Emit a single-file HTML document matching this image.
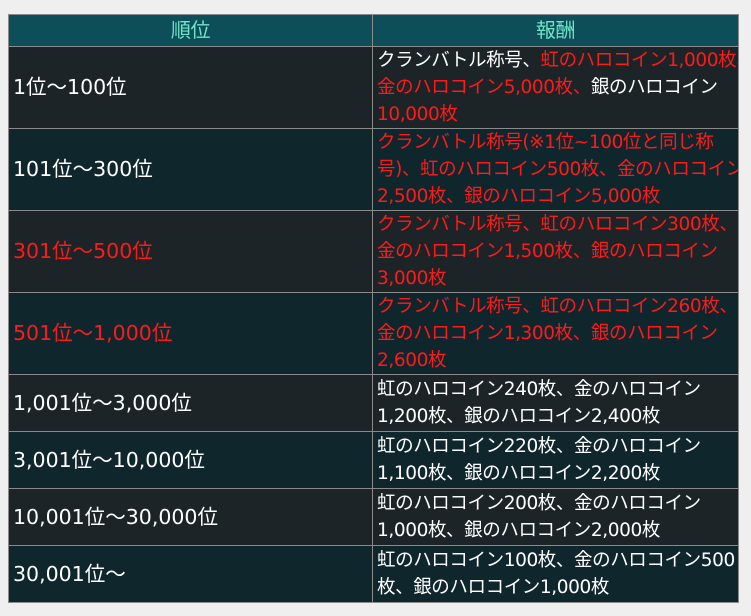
<!DOCTYPE html>
<html><head><meta charset="utf-8"><style>
body{margin:0;width:751px;height:616px;background:#efefef;font-family:"DejaVu Sans","Noto Sans CJK JP",sans-serif;}
table{position:absolute;left:8px;top:14px;width:730px;border-collapse:collapse;table-layout:fixed}
td,th{border:1px solid #8a8a8a;font-size:18.5px;line-height:27px;color:#fff;padding:0 0 0 4px;white-space:nowrap;font-weight:normal;text-align:left;vertical-align:middle;letter-spacing:-0.4px;overflow:hidden}
td:first-child{font-size:20.5px;letter-spacing:0}
th{background:#0e4e58;color:#6fe6c8;text-align:center;height:31px;padding:0;font-size:20px}
tr.a td{background:#1c2427}
tr.b td{background:#10262d}
.r{color:#ff1a1a}
</style></head><body>
<table>
<colgroup><col style="width:364px"><col style="width:366px"></colgroup>
<tr><th>順位</th><th>報酬</th></tr>
<tr class="a" style="height:82px"><td>1位～100位</td><td>クランバトル称号、<span class="r">虹のハロコイン1,000枚、<br>金のハロコイン5,000枚、</span>銀のハロコイン<br><span class="r">10,000枚</span></td></tr>
<tr class="b" style="height:82px"><td>101位～300位</td><td class="r">クランバトル称号(※1位~100位と同じ称<br>号)、虹のハロコイン500枚、金のハロコイン<br>2,500枚、銀のハロコイン5,000枚</td></tr>
<tr class="a" style="height:82px"><td class="r">301位～500位</td><td class="r">クランバトル称号、虹のハロコイン300枚、<br>金のハロコイン1,500枚、銀のハロコイン<br>3,000枚</td></tr>
<tr class="b" style="height:82px"><td class="r">501位～1,000位</td><td class="r">クランバトル称号、虹のハロコイン260枚、<br>金のハロコイン1,300枚、銀のハロコイン<br>2,600枚</td></tr>
<tr class="a" style="height:57px"><td>1,001位～3,000位</td><td>虹のハロコイン240枚、金のハロコイン<br>1,200枚、銀のハロコイン2,400枚</td></tr>
<tr class="b" style="height:57px"><td>3,001位～10,000位</td><td>虹のハロコイン220枚、金のハロコイン<br>1,100枚、銀のハロコイン2,200枚</td></tr>
<tr class="a" style="height:57px"><td>10,001位～30,000位</td><td>虹のハロコイン200枚、金のハロコイン<br>1,000枚、銀のハロコイン2,000枚</td></tr>
<tr class="b" style="height:57px"><td>30,001位～</td><td>虹のハロコイン100枚、金のハロコイン500<br>枚、銀のハロコイン1,000枚</td></tr>
</table>
</body></html>
